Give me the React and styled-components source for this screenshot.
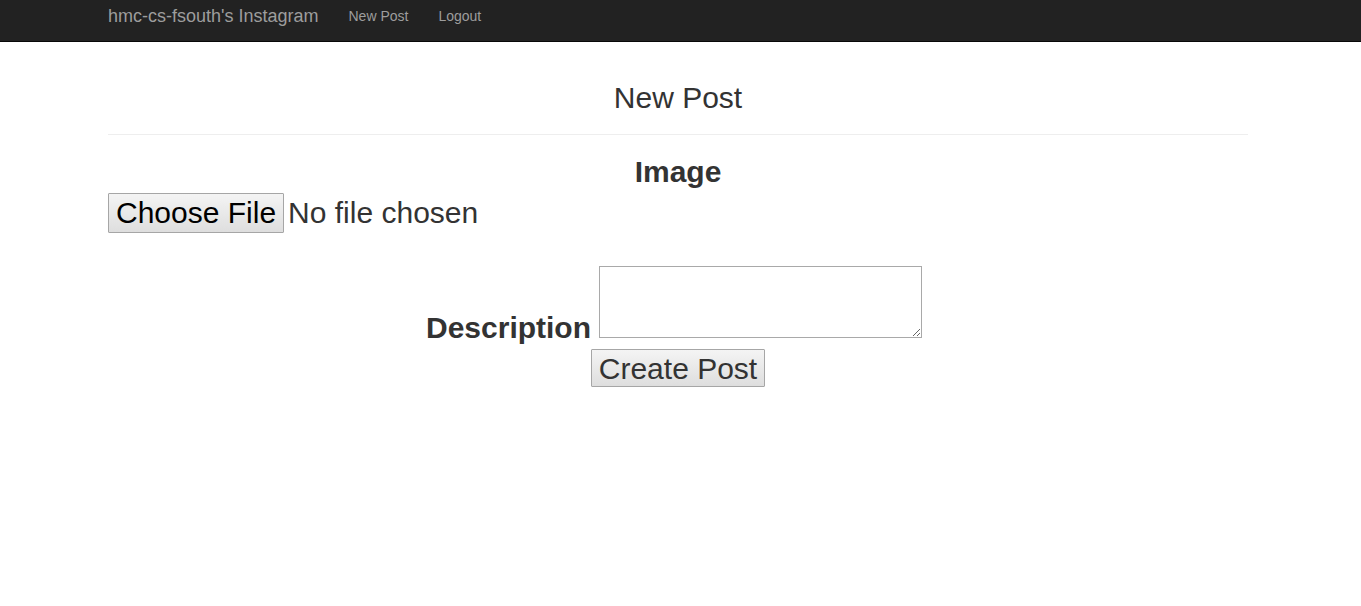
import React from "react";
import styled, { createGlobalStyle } from "styled-components";

const GlobalStyle = createGlobalStyle`
  html, body {
    margin: 0;
    padding: 0;
    background: #fff;
  }
  body {
    font-family: "Liberation Sans", Arial, Helvetica, sans-serif;
    font-size: 14px;
    line-height: 1.42857;
    color: #333;
  }
  * { box-sizing: border-box; }
`;

const Navbar = styled.nav`
  height: 42px;
  background: #222;
  border-bottom: 1px solid #080808;
`;

const NavInner = styled.div`
  width: 1140px;
  margin-left: 108px;
  display: flex;
  align-items: flex-start;
  padding-top: 6px;
`;

const Brand = styled.a`
  font-size: 18px;
  line-height: 20px;
  color: #9d9d9d;
  text-decoration: none;
  padding-right: 15px;
`;

const NavLink = styled.a`
  font-size: 14px;
  line-height: 20px;
  color: #9d9d9d;
  text-decoration: none;
  padding: 0 15px;
`;

const Main = styled.main`
  width: 1140px;
  margin-left: 108px;
  display: flex;
  flex-direction: column;
`;

const Title = styled.h2`
  margin: 39px 0 0;
  font-size: 30px;
  line-height: 33px;
  font-weight: 500;
  text-align: center;
  color: #333;
`;

const Divider = styled.hr`
  margin: 20px 0;
  border: 0;
  border-top: 1px solid #eee;
  height: 0;
`;

const FormGroup = styled.div`
  display: flex;
  flex-direction: column;
`;

const BlockLabel = styled.label`
  display: block;
  text-align: center;
  font-size: 30px;
  line-height: 33px;
  font-weight: 700;
  margin-bottom: 5px;
`;

const FileInput = styled.input`
  display: block;
  height: 40px;
  font-family: "Liberation Sans", Arial, Helvetica, sans-serif;
  font-size: 30px;
  color: #333;
  padding: 0;
  &::file-selector-button {
    font-family: "Liberation Sans", Arial, Helvetica, sans-serif;
    font-size: 30px;
    color: #000;
    height: 40px;
    padding: 0 7px;
    margin: 0 4px 0 0;
    border: 1px solid #a6a6a6;
    border-radius: 1px;
    background: linear-gradient(to bottom, #f4f4f4, #dedede);
  }
`;

const DescriptionRow = styled.div`
  margin-top: 33px;
  display: flex;
  justify-content: center;
  align-items: flex-end;
  gap: 8px;
  padding-right: 8px;
`;

const InlineLabel = styled.label`
  font-size: 30px;
  line-height: 33px;
  font-weight: 700;
  margin-bottom: -6px;
`;

const TextArea = styled.textarea`
  display: block;
  width: 323px;
  height: 72px;
  margin: 0;
  border: 1px solid #a9a9a9;
  font-family: "Liberation Sans", Arial, sans-serif;
  font-size: 14px;
`;

const SubmitButton = styled.button`
  align-self: center;
  margin-top: 11px;
  height: 38px;
  padding: 1px 7px 0;
  font-family: "Liberation Sans", Arial, Helvetica, sans-serif;
  font-size: 30px;
  line-height: 34px;
  color: #333;
  border: 1px solid #a6a6a6;
  border-radius: 1px;
  background: linear-gradient(to bottom, #f4f4f4, #dedede);
`;

export default function App() {
  return (
    <>
      <GlobalStyle />
      <Navbar>
        <NavInner>
          <Brand href="#">hmc-cs-fsouth's Instagram</Brand>
          <NavLink href="#">New Post</NavLink>
          <NavLink href="#">Logout</NavLink>
        </NavInner>
      </Navbar>
      <Main>
        <Title>New Post</Title>
        <Divider />
        <FormGroup>
          <BlockLabel htmlFor="image">Image</BlockLabel>
          <FileInput id="image" type="file" />
        </FormGroup>
        <DescriptionRow>
          <InlineLabel htmlFor="description">Description</InlineLabel>
          <TextArea id="description" />
        </DescriptionRow>
        <SubmitButton type="submit">Create Post</SubmitButton>
      </Main>
    </>
  );
}
